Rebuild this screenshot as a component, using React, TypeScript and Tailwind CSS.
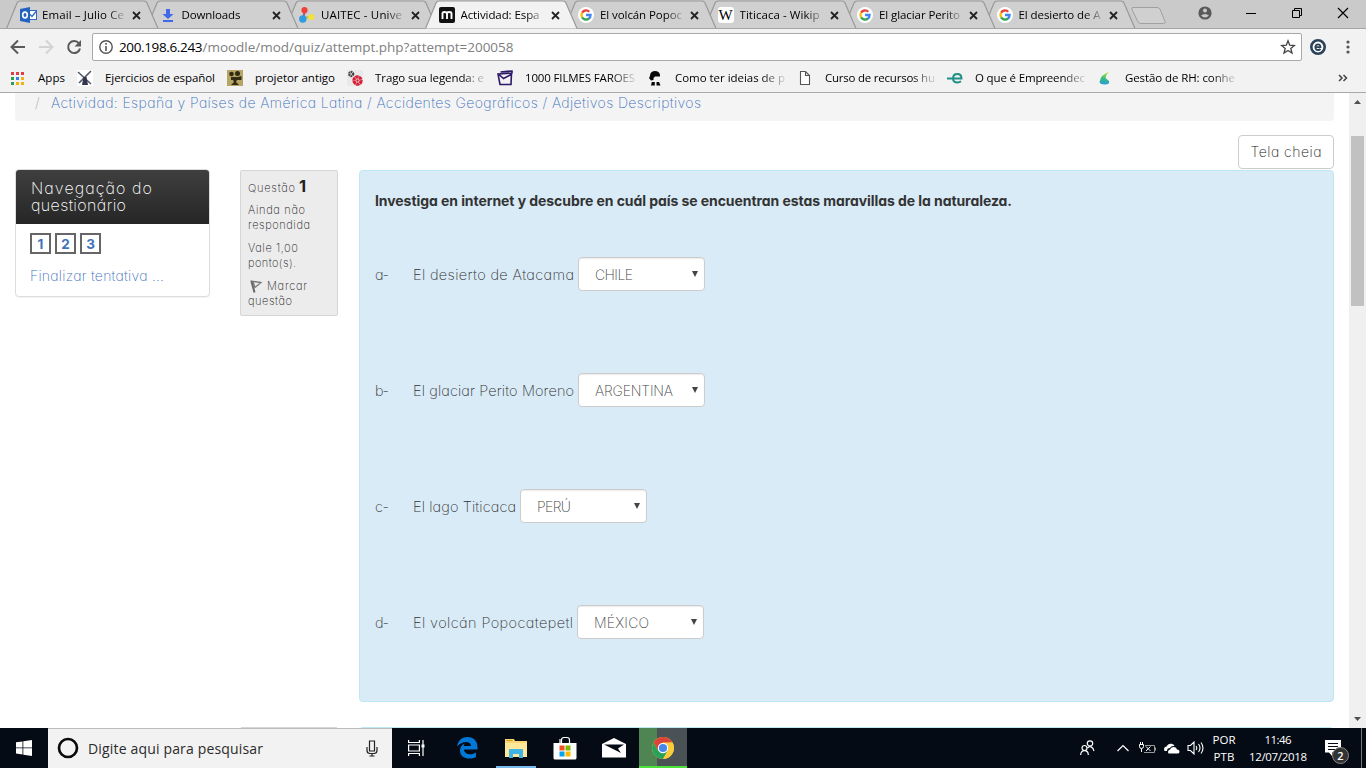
import { useLayoutEffect, useRef, useState } from 'react';
import type { ReactNode } from 'react';

/* Text set to a fixed measure by tracking its letters. */
function Fit({ children, w, className = '' }: { children: string; w: number; className?: string }) {
  const ref = useRef<HTMLSpanElement>(null);
  const [ls, setLs] = useState(0);
  useLayoutEffect(() => {
    if (!ref.current) return;
    const natural = ref.current.getBoundingClientRect().width;
    setLs((w - natural) / Math.max(1, children.length - 1));
  }, [w, children]);
  return (
    <span ref={ref} className={`inline-block whitespace-pre ${className}`} style={{ letterSpacing: ls, marginRight: -ls }}>
      {children}
    </span>
  );
}

const UI = "font-['Open_Sans',sans-serif]";
const FADE = '[mask-image:linear-gradient(to_right,black_78%,transparent_102%)]';

function Google() {
  return (
    <svg width="16" height="16" viewBox="0 0 16 16">
      <circle cx="8" cy="8" r="8" fill="#fff" />
      <g fill="none" strokeWidth="2.3">
        <path d="M4.1 5.7A4.6 4.6 0 0 1 11.3 4.8" stroke="#ea4335" />
        <path d="M4.1 5.6A4.8 4.8 0 0 0 4.1 10.4" stroke="#fbbc05" />
        <path d="M4.1 10.3A4.6 4.6 0 0 0 11 11.5" stroke="#34a853" />
        <path d="M8 8h4.6A4.6 4.6 0 0 1 10.9 11.6" stroke="#4285f4" />
      </g>
    </svg>
  );
}

function Outlook() {
  return (
    <svg width="17" height="16" viewBox="0 0 17 16">
      <rect x="8.5" y="3.5" width="8" height="9" fill="#fff" stroke="#2a6ac4" />
      <path d="M9 6.5l3 3 4-5" fill="none" stroke="#2a6ac4" strokeWidth="1.3" />
      <path d="M0 2l10-2v16L0 14z" fill="#2464c0" />
      <ellipse cx="5" cy="8" rx="2.3" ry="2.9" fill="none" stroke="#fff" strokeWidth="1.6" />
    </svg>
  );
}

function Download() {
  return (
    <svg width="16" height="16" viewBox="0 0 16 16" fill="#4169e8">
      <path d="M6 2h4v5h3.500L8 12 2.500 7H6zM3 13h10v2H3z" />
    </svg>
  );
}

function Uaitec() {
  return (
    <svg width="16" height="16" viewBox="0 0 16 16">
      <path d="M5.500 4l-1 7" stroke="#a25a70" strokeWidth="2" />
      <path d="M5 11l6-1" stroke="#b8c050" strokeWidth="2" />
      <circle cx="5.500" cy="3.200" r="3.100" fill="#ef4136" />
      <circle cx="3.800" cy="12" r="3.700" fill="#2f9be0" />
      <circle cx="12.300" cy="10" r="3.100" fill="#f4e23a" />
    </svg>
  );
}

function Moodle() {
  return (
    <svg width="16" height="16" viewBox="0 0 16 16">
      <rect width="16" height="16" rx="2" fill="#111" />
      <path d="M3.500 12V6.500Q3.500 5 5.500 5T8 6.500V12M8 6.500Q8 5 10.200 5T12.500 6.500V12" fill="none" stroke="#fff" strokeWidth="1.900" />
    </svg>
  );
}

function Wikipedia() {
  return (
    <span className="grid size-4 place-items-center rounded-[3px] bg-white font-['Liberation_Serif',serif] text-[15px] leading-none text-black">W</span>
  );
}

type TabData = { title: string; w: number; icon: ReactNode };
const tabs: TabData[] = [
  { title: 'Email – Julio Ce', w: 82, icon: <Outlook /> },
  { title: 'Downloads', w: 59, icon: <Download /> },
  { title: 'UAITEC - Unive', w: 81, icon: <Uaitec /> },
  { title: 'Actividad: Espa', w: 79, icon: <Moodle /> },
  { title: 'El volcán Popoc', w: 82, icon: <Google /> },
  { title: 'Titicaca - Wikip', w: 80, icon: <Wikipedia /> },
  { title: 'El glaciar Perito', w: 81, icon: <Google /> },
  { title: 'El desierto de A', w: 82, icon: <Google /> },
];
const stack = ['z-20', 'z-[19]', 'z-[18]', 'z-30', 'z-[16]', 'z-[15]', 'z-[14]', 'z-[13]'];

function Tab({ tab, index }: { tab: TabData; index: number }) {
  const active = index === 3;
  return (
    <div className={`relative flex h-[29px] w-[139.500px] shrink-0 items-center pt-[1px] pl-[14px] ${stack[index]}`}>
      <svg className="absolute top-0 left-0 -z-10" width="153" height="29" viewBox="0 0 153 29">
        <path d="M0.500 28.500L11 3Q12 1 14 1H138Q140 1 141 3L152 28.500" fill={active ? '#f2f2f2' : '#d0d0d0'} stroke="#999" strokeWidth="1.200" />
        {!active && <path d="M0 28.500H153" stroke="#a5a5a5" />}
      </svg>
      <span className="flex w-[22px] shrink-0">{tab.icon}</span>
      <span className={`w-[84px] overflow-hidden text-[11.500px] leading-4 ${FADE}`}>
        <Fit w={tab.w}>{tab.title}</Fit>
      </span>
      <svg className="ml-[6px]" width="9" height="9" viewBox="0 0 9 9"><path d="M1 1l7 7M8 1l-7 7" stroke="#222" strokeWidth="1.800" /></svg>
    </div>
  );
}

function TabStrip() {
  return (
    <div className="flex h-[29px] border-b border-[#a5a5a5] bg-[#cacaca] pl-[6px]">
      <div className="isolate flex h-[29px]">
        {tabs.map((t, i) => <Tab key={t.title} tab={t} index={i} />)}
      </div>
      <svg className="mt-[6px] ml-[9px]" width="36" height="19" viewBox="0 0 36 19">
        <path d="M2 1.500H26Q28 1.500 29 3L34 15.500Q34.500 17.500 32.500 17.500H10Q8 17.500 7 16L1 3.500Q0.500 1.500 2 1.500z" fill="#d0d0d0" stroke="#a0a0a0" />
      </svg>
      <div className="mr-[17px] ml-auto flex items-center">
        <svg className="mb-[2px]" width="14" height="14" viewBox="0 0 14 14">
          <circle cx="7" cy="7" r="6.600" fill="#5a5a5a" />
          <circle cx="7" cy="4.500" r="2" fill="#cacaca" />
          <path d="M3 9.500Q7 6.500 11 9.500Q7 13.500 3 9.500z" fill="#cacaca" />
        </svg>
        <svg className="mb-[2px] ml-[34px]" width="10" height="10"><path d="M0 5.500h10" stroke="#000" /></svg>
        <svg className="mb-[2px] ml-[36px]" width="10" height="10" fill="none" stroke="#000"><path d="M0.500 2.500h7v7h-7zM2.500 2.500v-2h7v7h-2" /></svg>
        <svg className="mb-[2px] ml-[35px]" width="12" height="12"><path d="M1 1l10 10M11 1L1 11" stroke="#000" strokeWidth="1.200" /></svg>
      </div>
    </div>
  );
}

function Toolbar() {
  return (
    <div className="flex h-[36px] items-center pl-[10px]">
      <svg width="16" height="16" viewBox="0 0 16 16" fill="none" stroke="#5a5a5a" strokeWidth="2"><path d="M15 8H2.500M8 1.500L1.500 8 8 14.500" /></svg>
      <svg className="ml-[12px]" width="16" height="16" viewBox="0 0 16 16" fill="none" stroke="#d3d3d3" strokeWidth="2"><path d="M1 8h12.500M8 1.500L14.500 8 8 14.500" /></svg>
      <svg className="ml-[12px]" width="16" height="16" viewBox="0 0 16 16"><path d="M13 4.500A6 6 0 1 0 14 9.500" fill="none" stroke="#5a5a5a" strokeWidth="2" /><path d="M15 1v6.500H8.500z" fill="#5a5a5a" /></svg>
      <div className="ml-[10px] flex h-[28px] w-[1210px] items-center rounded-[2px] border border-[#a9a9a9] bg-white pl-[6px]">
        <svg width="14" height="14" viewBox="0 0 14 14"><circle cx="7" cy="7" r="6.200" fill="none" stroke="#555" strokeWidth="1.400" /><path d="M7 3v1.700M7 6v5" stroke="#555" strokeWidth="1.600" /></svg>
        <span className="ml-[6px] text-[13.500px] leading-5 text-black"><Fit w={83.500}>200.198.6.243</Fit></span>
        <span className="text-[13.500px] leading-5 text-[#808080]"><Fit w={311}>/moodle/mod/quiz/attempt.php?attempt=200058</Fit></span>
        <svg className="mr-[5px] ml-auto" width="16" height="16" viewBox="0 0 16 16"><path d="M8 1.800l1.700 4.400 4.700.3-3.600 3 1.200 4.600L8 11.500l-4 2.600 1.200-4.600-3.600-3 4.700-.3z" fill="none" stroke="#444" strokeWidth="1.300" /></svg>
      </div>
      <svg className="ml-[8px]" width="16" height="16" viewBox="0 0 16 16"><circle cx="8" cy="8" r="6.700" fill="#fff" stroke="#2b4258" strokeWidth="2.600" /><path d="M5 8.200h5.500Q10.500 5.300 8 5.300T5.300 8.200Q5.500 11 8 11 9.500 11 10.500 10" fill="none" stroke="#2b4258" strokeWidth="1.800" /></svg>
      <svg className="ml-[20px]" width="4" height="14" viewBox="0 0 4 14" fill="#555"><circle cx="2" cy="2" r="1.600" /><circle cx="2" cy="7" r="1.600" /><circle cx="2" cy="12" r="1.600" /></svg>
    </div>
  );
}

const ib = { width: 16, height: 16, viewBox: '0 0 16 16' };
const bookmarks = [
  { t: 'Ejercicios de español', w: 110, wide: true, fade: false, icon: <svg {...ib}><rect width="16" height="16" fill="#fff" /><path d="M1 2l13 12M14 1L2 13" stroke="#55566a" strokeWidth="1.600" /><path d="M5 15l1.500-8h3L11 15z" fill="#33354a" /></svg> },
  { t: 'projetor antigo', w: 80, wide: false, fade: false, icon: <svg {...ib}><rect width="16" height="16" fill="#b5a566" /><circle cx="4.500" cy="4" r="2.300" fill="#332b12" /><circle cx="10.500" cy="3.500" r="2.500" fill="#332b12" /><path d="M4 7h7l3.500-1v4H10l-1 2 3 3H4l3-3-1-2H4z" fill="#332b12" /></svg> },
  { t: 'Trago sua legenda: e', w: 109, wide: true, fade: true, icon: <svg {...ib}><rect width="16" height="16" rx="2" fill="#e9e9e9" /><circle cx="4.200" cy="4" r="2" fill="none" stroke="#444" strokeWidth="2.300" strokeDasharray="1.500 .5" /><circle cx="10.500" cy="10.500" r="3.600" fill="none" stroke="#d81e34" strokeWidth="3.200" strokeDasharray="3.200 .4" /><circle cx="10.500" cy="10.500" r="1.200" fill="#d81e34" /></svg> },
  { t: '1000 FILMES FAROES', w: 110, wide: true, fade: true, icon: <svg {...ib} fill="none" stroke="#2e1b68" strokeWidth="1.600"><path d="M1 4l13.500-1-.5 11.500H3zM2 4.500l4.500 4 7.500-4M3.500 2l11.500-1v2.500" /></svg> },
  { t: 'Como ter ideias de p', w: 110, wide: true, fade: true, icon: <svg {...ib}><path d="M3 6Q3 1 8.500 1Q13.500 1.500 13 6.500L8 6.500 6.500 8 6.500 10 4 10.500 2 8z" fill="#080808" /><path d="M4 15.500l.8-3.500h3v3.500zM9.500 12H12l1.500 3.500h-4z" fill="#080808" /></svg> },
  { t: 'Curso de recursos hu', w: 110, wide: true, fade: true, icon: <svg {...ib}><path d="M3.500 1.500h5l4 4v9h-9zM8.500 1.500v4h4" fill="#fff" stroke="#555" strokeWidth="1.100" /></svg> },
  { t: 'O que é Empreendec', w: 110, wide: true, fade: true, icon: <svg {...ib}><path d="M0 8.500h14.500Q14.500 4 10.300 4T6 8.500Q6 12.500 10.500 12.500 12.500 12.500 14 11.300" fill="none" stroke="#1f8f87" strokeWidth="1.900" /></svg> },
  { t: 'Gestão de RH: conhe', w: 110, wide: true, fade: true, icon: <svg {...ib}><defs><linearGradient id="rh" x2="0" y2="1"><stop stopColor="#c4e838" /><stop offset=".5" stopColor="#37bc7c" /><stop offset="1" stopColor="#2a9bd8" /></linearGradient></defs><path d="M12 2Q4 4 2.500 12Q3 14.500 8 14.500Q13 14.500 12 11L8.500 8Q9 4.500 12 2z" fill="url(#rh)" /></svg> },
];
const appDots = ['#e04040', '#e04040', '#e04040', '#2ca04c', '#3b7de8', '#f0b310', '#2ca04c', '#f0b310', '#f0b310'];

function Bookmarks() {
  return (
    <div className="flex h-[28px] items-center border-b border-[#a9a9a9] pb-px pl-[11px] text-[11.500px] leading-4">
      <svg width="13" height="13" viewBox="0 0 13 13">{appDots.map((c, i) => <rect key={i} x={(i % 3) * 5} y={Math.floor(i / 3) * 5} width="3" height="3" fill={c} />)}</svg>
      <span className="ml-[14px] w-[39px]"><Fit w={27}>Apps</Fit></span>
      {bookmarks.map((b) => (
        <div key={b.t} className={`flex shrink-0 items-center ${b.wide ? 'w-[150px]' : 'w-[120px]'}`}>
          <span className="w-[28px] shrink-0">{b.icon}</span>
          <span className={`overflow-hidden ${b.fade ? 'w-[111px] ' + FADE : ''}`}><Fit w={b.w}>{b.t}</Fit></span>
        </div>
      ))}
      <svg className="ml-[91px]" width="10" height="8" viewBox="0 0 10 8"><path d="M1 1l3 3-3 3M5.500 1l3 3-3 3" fill="none" stroke="#444" strokeWidth="1.500" /></svg>
    </div>
  );
}

const rows = [
  { l: 'a-', t: 'El desierto de Atacama', w: 161, v: 'CHILE', vw: 38 },
  { l: 'b-', t: 'El glaciar Perito Moreno', w: 161, v: 'ARGENTINA', vw: 78 },
  { l: 'c-', t: 'El lago Titicaca', w: 103, v: 'PERÚ', vw: 34 },
  { l: 'd-', t: 'El volcán Popocatepetl', w: 160, v: 'MÉXICO', vw: 55 },
];

function Question() {
  return (
    <div className="h-[532px] w-[975px] rounded-[4px] border border-[#bce8f1] bg-[#d9ebf7] pl-[15px] text-[#333]">
      <p className="mt-[20px] h-5 text-[14px] leading-5 font-bold"><Fit w={637}>Investiga en internet y descubre en cuál país se encuentran estas maravillas de la naturaleza.</Fit></p>
      <div className="mt-[46px] flex flex-col gap-[82px]">
        {rows.map((r) => (
          <div key={r.l} className="flex h-[34px] items-center text-[14.500px] leading-5">
            <span className="w-[38px] pt-[2px]"><Fit w={14}>{r.l}</Fit></span>
            <span className="pt-[2px]"><Fit w={r.w}>{r.t}</Fit></span>
            <button className="ml-[4px] flex h-[34px] w-[127px] items-center rounded-[4px] border border-[#ccc] bg-white pt-px pr-[6px] pl-[16px] text-[14px] text-[#444] shadow-[inset_0_1px_1px_rgba(0,0,0,0.08)]">
              <Fit w={r.vw}>{r.v}</Fit>
              <svg className="mb-[2px] ml-auto" width="6" height="6"><path d="M0 0h6L3 6z" fill="#444" /></svg>
            </button>
          </div>
        ))}
      </div>
    </div>
  );
}

function Sidebar() {
  return (
    <aside className="-mt-px h-[128px] w-[195px] shrink-0 overflow-hidden rounded-[4px] border border-[#ddd] bg-white shadow-[0_1px_1px_rgba(0,0,0,0.05)]">
      <h2 className="flex h-[54px] flex-col bg-linear-to-b from-[#3f3f3f] to-[#262626] pt-[10px] pl-[15px] text-[16px] leading-[17px] text-white">
        <span className="h-[17px]"><Fit w={121}>Navegação do</Fit></span>
        <span className="h-[17px]"><Fit w={95}>questionário</Fit></span>
      </h2>
      <div className="flex gap-[4px] pt-[9px] pl-[14px]">
        {['1', '2', '3'].map((n) => (
          <a key={n} className="grid h-[21px] w-[21px] place-items-center border-2 border-[#666] pt-px text-[13.500px] leading-4 font-bold text-[#3f73bd]">{n}</a>
        ))}
      </div>
      <a className="mt-[12px] ml-[14px] block text-[14px] leading-5 text-[#3f73bd]"><Fit w={134}>Finalizar tentativa ...</Fit></a>
    </aside>
  );
}

function Info() {
  return (
    <div className="ml-[30px] flex h-[146px] w-[98px] shrink-0 flex-col rounded-[2px] border border-[#d6d6d6] bg-[#ececec] pt-[6px] pl-[7px] text-[11px] leading-[15px] text-[#222]">
      <div className="flex h-[19px] items-baseline leading-[19px]">
        <Fit w={47}>Questão</Fit><b className="ml-[4px] text-[16.500px] font-bold">1</b>
      </div>
      <div className="mt-[7px] h-[15px]"><Fit w={57}>Ainda não</Fit></div>
      <div className="h-[15px]"><Fit w={62}>respondida</Fit></div>
      <div className="mt-[8px] h-[15px]"><Fit w={50}>Vale 1,00</Fit></div>
      <div className="h-[15px]"><Fit w={48}>ponto(s).</Fit></div>
      <div className="mt-[8px] flex h-[15px] items-center">
        <svg className="ml-[2px]" width="12" height="13" viewBox="0 0 12 13" fill="none"><path d="M0.500 1L11 2.500 5 7.500 3 1.500" stroke="#777" strokeWidth="1.300" /><path d="M1.500 1.500L4.500 12.500" stroke="#666" strokeWidth="2" /></svg>
        <span className="ml-[5px]"><Fit w={40}>Marcar</Fit></span>
      </div>
      <div className="h-[15px]"><Fit w={44}>questão</Fit></div>
    </div>
  );
}

function Page() {
  return (
    <div className="flex h-[635px] bg-white font-['Inter',sans-serif] font-extralight [font-feature-settings:'cv11'_1]">
      <main className="h-full w-[1349px] overflow-hidden pr-[15px] pl-[15px]">
        <div className="flex h-[28px] items-start rounded-b-[4px] bg-[#f4f4f4] pl-[20px] text-[14px] leading-5">
          <span className="w-[16px] text-[#aaa]">/</span>
          <Fit w={650} className="text-[#3f73bd]">Actividad: España y Países de América Latina / Accidentes Geográficos / Adjetivos Descriptivos</Fit>
        </div>
        <div className="mt-[14px] flex h-[35px] justify-end">
          <button className="h-[34px] w-[96px] rounded-[4px] border border-[#ccc] bg-white text-[14px] leading-5 text-[#222]"><Fit w={71}>Tela cheia</Fit></button>
        </div>
        <div className="flex h-[532px]">
          <Sidebar />
          <Info />
          <div className="ml-[21px]"><Question /></div>
        </div>
        <div className="mt-[25px] flex pl-[225px]">
          <div className="h-[20px] w-[98px] rounded-[2px] border border-[#d6d6d6] bg-[#ececec]" />
          <div className="ml-[21px] h-[20px] w-[975px] rounded-[4px] border border-[#bce8f1] bg-[#d9ebf7]" />
        </div>
      </main>
      <div className="flex w-[17px] flex-col items-center bg-[#f0f0f0] pt-[7px] pb-[7px]">
        <svg width="7" height="4"><path d="M0 4L3.500 0 7 4z" fill="#505050" /></svg>
        <div className="mt-[32px] h-[170px] w-[13px] bg-[#c1c1c1]" />
        <svg className="mt-auto" width="7" height="4"><path d="M0 0h7L3.500 4z" fill="#505050" /></svg>
      </div>
    </div>
  );
}

function Taskbar() {
  return (
    <div className="flex h-[40px] bg-[#050b14] text-white">
      <div className="grid w-[48px] place-items-center">
        <svg width="16" height="16" viewBox="0 0 16 16" fill="#fff"><path d="M0 2.300L6.500 1.400V7.500H0zM7.300 1.300L16 0V7.500H7.300zM0 8.300H6.500V14.500L0 13.600zM7.300 8.300H16V16L7.300 14.700z" /></svg>
      </div>
      <div className="flex w-[344px] items-center border-t border-[#bbb] bg-[#f2f2f2] pl-[9px]">
        <svg className="mb-px" width="22" height="22" viewBox="0 0 22 22"><circle cx="11" cy="11" r="9" fill="none" stroke="#0a0a0a" strokeWidth="2.700" /></svg>
        <span className="ml-[9px] text-[14px] leading-5 text-[#2b2b2b]"><Fit w={175}>Digite aqui para pesquisar</Fit></span>
        <svg className="ml-[103px]" width="12" height="17" viewBox="0 0 12 17" fill="none" stroke="#222" strokeWidth="1.200"><path d="M3.500 1h5v10h-5zM1 7v3.500Q1 13.500 4 13.500H8Q11 13.500 11 10.500V7M6 13.500V16M3.500 16h5" /></svg>
      </div>
      <div className="grid w-[48px] place-items-center">
        <svg width="17" height="16" viewBox="0 0 17 16" fill="none" stroke="#fff" strokeWidth="1.200"><path d="M.6 0v2.500h10.800V0M.6 5h10.800v6H.6zM.6 16v-2.500h10.800V16M15 0v16" /><path d="M13.500 4.500h3v3h-3z" fill="#fff" stroke="none" /></svg>
      </div>
      <div className="ml-[6px] grid w-[42px] place-items-center">
        <svg width="21" height="22" viewBox="0 0 21 22"><path d="M0 9.500C1 3 5.500 0 10.500 0C17 0 20.500 4.500 20.500 10V12.500H7C7 17 14 19 19 15.500V20C13 23 3 22 3 13.500C3 10 5 7.500 8 6.500C6.800 7.500 6.800 8.500 6.800 9H14C14 3.500 5 3.500 0 9.500Z" fill="#0078d7" /></svg>
      </div>
      <div className="ml-[8px] flex w-[40px] flex-col items-center justify-end border-b-2 border-[#76b9ed] pb-[8px]">
        <svg width="22" height="19" viewBox="0 0 22 19"><path d="M0 0h9l1 2h12v16H0z" fill="#f8d775" /><path d="M1.500 1.500h6" stroke="#d49b17" /><path d="M0 4h22v14H0z" fill="#ffe79a" /><path d="M4 19v-8q0-1 1-1h12q1 0 1 1v8h-4v-4H8v4z" fill="#3fb5e6" /></svg>
      </div>
      <div className="grid w-[57px] place-items-center pb-px">
        <svg width="24" height="24" viewBox="0 0 24 24"><path d="M8.500 7V4Q8.500 1.500 11 1.500H14Q16.500 1.500 16.500 4V7M7 7V3" fill="none" stroke="#fff" strokeWidth="1.200" /><path d="M.5 7h23v15q0 1.500-1.500 1.500H2Q.5 23.500.5 22z" fill="#fff" /><path d="M6.500 9.500h5v5h-5z" fill="#f25022" /><path d="M12.500 9.500h5v5h-5z" fill="#7fba00" /><path d="M6.500 15.500h5v5h-5z" fill="#00a4ef" /><path d="M12.500 15.500h5v5h-5z" fill="#ffb900" /></svg>
      </div>
      <div className="-ml-px grid w-[44px] place-items-center">
        <svg width="24" height="20" viewBox="0 0 24 20"><path d="M0 6L12 0 24 6V19.500H0z" fill="#fff" /><path d="M2 6.500H22L16 10.500 19 15 2 6.500z" fill="#050b14" /></svg>
      </div>
      <div className="ml-[3px] grid w-[48px] place-items-center border-b-2 border-[#4be23b] bg-linear-to-r from-[#4f8553] from-[37.500%] to-[#4b5255] to-[37.500%]">
        <svg className="mt-px" width="22" height="22" viewBox="0 0 22 22"><circle cx="11" cy="11" r="11" fill="#fbcb3e" /><path d="M1.500 5.500A11 11 0 0 1 20.500 5.500H11L6.200 13.800z" fill="#db4437" /><path d="M1.500 5.500A11 11 0 0 0 11 22L15.800 13.800 6.200 13.800z" fill="#28a15a" /><path d="M20.500 5.500A11 11 0 0 1 11 22L15.800 13.800 11 6z" fill="#fbcb3e" /><circle cx="11" cy="11" r="5.200" fill="#fff" /><circle cx="11" cy="11" r="4.100" fill="#4787ed" /></svg>
      </div>
      <div className="mr-[4px] ml-auto flex items-center border-r border-[#777] pr-[20px]">
        <svg width="15" height="16" viewBox="0 0 15 16" fill="none" stroke="#fff" strokeWidth="1.200"><circle cx="10" cy="3.500" r="2.700" /><circle cx="4.500" cy="8" r="2.500" /><path d="M.7 15Q.7 10.700 4.500 10.700T8.300 15M7.500 8Q10 5 13 8.500L14 11" /></svg>
        <svg className="ml-[22px]" width="12" height="8" viewBox="0 0 12 8"><path d="M.5 7L6 1.500 11.500 7" fill="none" stroke="#fff" strokeWidth="1.200" /></svg>
        <svg className="ml-[10px]" width="17" height="14" viewBox="0 0 17 14" fill="none" stroke="#fff"><path d="M.5 3.500h4v2Q4.500 7.500 2.500 7.500T.5 5.500zM1.500 1v2M3.500 1v2M2.500 7.500v3.500" /><path d="M6 4.500h9.500v7H5M16.500 6.500v3" stroke="#999" /><path d="M7 5.500l4.500 4.500M11.500 5.500L7 10" /></svg>
        <svg className="ml-[7px]" width="17" height="12" viewBox="0 0 17 12" fill="#fff"><path d="M1.500 9Q0 5 3.500 4.500Q5 1 8.500 1.800Q11 2 11.500 4Q8 3.500 7 6Q4 6 4 9z" /><path d="M5.500 11.500Q4 8.500 7 7.500Q8 4.700 11 5Q13.500 5 14 7.500Q16.500 7.500 16.500 9.500T15 11.500z" /></svg>
        <svg className="ml-[7px]" width="18" height="14" viewBox="0 0 18 14" fill="none" stroke="#fff" strokeWidth="1.100"><path d="M1 4.500h2.500L7 1v12L3.500 9.500H1zM9 5q1.500 2 0 4M11.500 3q3 4 0 8M14 1.500q4 5.500 0 11" /></svg>
        <div className="ml-[7px] flex w-[24px] flex-col items-center text-[11.500px] leading-[17px]"><Fit w={23}>POR</Fit><Fit w={21}>PTB</Fit></div>
        <div className="ml-[12px] flex w-[60px] flex-col items-center text-[11.500px] leading-[17px]"><Fit w={27}>11:46</Fit><Fit w={58}>12/07/2018</Fit></div>
        <div className="relative ml-[17px] h-[16px] w-[16px]">
          <svg width="16" height="16" viewBox="0 0 16 16"><path d="M0 0h16v12.500H7V16l-3-3.500H0z" fill="#fff" /><path d="M3 3.500h10M3 6.500h10M3 9.500h7" stroke="#050b14" /></svg>
          <span className="absolute top-[7px] left-[7px] grid size-[17px] place-items-center rounded-full border border-[#888] bg-[#333] text-[11px] leading-none font-semibold">2</span>
        </div>
      </div>
    </div>
  );
}

export default function App() {
  return (
    <div className={`h-[768px] w-[1366px] overflow-hidden bg-[#f2f2f2] text-black ${UI}`}>
      <TabStrip />
      <Toolbar />
      <Bookmarks />
      <Page />
      <Taskbar />
    </div>
  );
}
